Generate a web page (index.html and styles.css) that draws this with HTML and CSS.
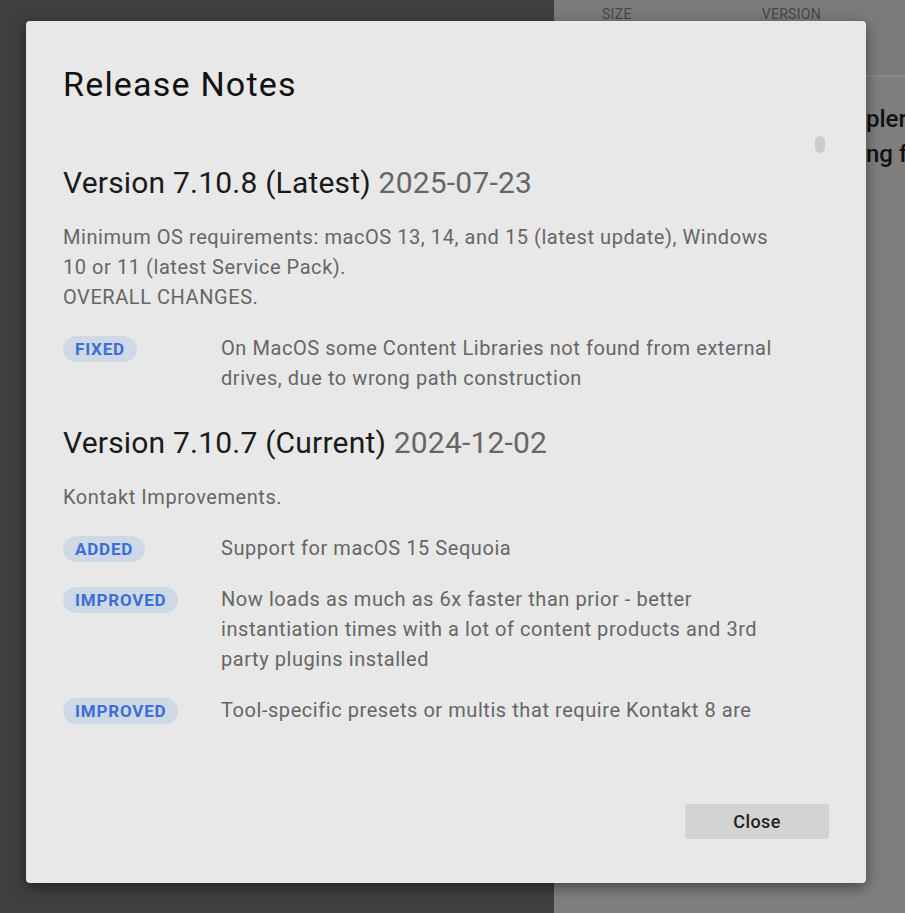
FILE: index.html
```html
<!DOCTYPE html>
<html lang="en">
<head>
    <meta charset="UTF-8">
    <meta name="viewport" content="width=device-width, initial-scale=1.0">
    <title>Release Notes</title>
    <link rel="stylesheet" href="styles.css">
</head>
<body>
    <div class="app">
        <div class="side-left"></div>
        <div class="side-right">
            <div class="table-head">
                <span class="col-size">Size</span>
                <span class="col-version">Version</span>
            </div>
            <div class="detail">
                <p>plers</p>
                <p>ng features</p>
            </div>
        </div>
    </div>

    <!-- Dialog -->
    <div class="modal">
        <h1 class="modal-title">Release Notes</h1>
        <div class="notes">
            <div class="notes-inner">
                <section class="release">
                    <h2>Version 7.10.8 (Latest) <span class="date">2025-07-23</span></h2>
                    <p class="intro">Minimum OS requirements: macOS 13, 14, and 15 (latest update), Windows 10 or 11 (latest Service Pack).<br>OVERALL CHANGES.</p>
                    <div class="change">
                        <div><span class="tag">Fixed</span></div>
                        <p>On MacOS some Content Libraries not found from external drives, due to wrong path construction</p>
                    </div>
                </section>
                <section class="release">
                    <h2>Version 7.10.7 (Current) <span class="date">2024-12-02</span></h2>
                    <p class="intro">Kontakt Improvements.</p>
                    <div class="change">
                        <div><span class="tag">Added</span></div>
                        <p>Support for macOS 15 Sequoia</p>
                    </div>
                    <div class="change">
                        <div><span class="tag">Improved</span></div>
                        <p>Now loads as much as 6x faster than prior - better instantiation times with a lot of content products and 3rd party plugins installed</p>
                    </div>
                    <div class="change">
                        <div><span class="tag">Improved</span></div>
                        <p>Tool-specific presets or multis that require Kontakt 8 are flagged in the browser and can no longer be loaded</p>
                    </div>
                </section>
            </div>
            <div class="scroll-thumb"></div>
        </div>
        <div class="modal-footer">
            <button class="btn-close">Close</button>
        </div>
    </div>
</body>
</html>
```

FILE: styles.css
```css
body {
    margin: 0;
    font-family: Roboto, "Noto Sans", sans-serif;
    overflow: hidden;
}
.app {
    display: flex;
    height: 100vh;
}
.side-left {
    flex: 0 0 554px;
    background-color: #3f3f3f;
}
.side-right {
    flex: 1;
    min-width: 0;
    background-color: #7e7e7e;
    display: flex;
    flex-direction: column;
}
.table-head {
    display: flex;
    height: 75px;
    border-bottom: 2px solid #878787;
    background-color: #7b7b7b;
    font-size: 14px;
    letter-spacing: 0.3px;
    text-transform: uppercase;
    color: #474747;
}
.col-size {
    margin-left: 48px;
    margin-top: 6px;
}
.col-version {
    margin-left: 130px;
    margin-top: 6px;
}
.detail {
    padding: 25px 0 0 312px;
    font-size: 24px;
    font-weight: 500;
    color: #111;
    white-space: nowrap;
    overflow: hidden;
}
.detail p {
    margin: 0;
    line-height: 35px;
}

.modal {
    position: absolute;
    top: 21px;
    left: 26px;
    width: 766px;
    padding: 43px 37px 44px;
    background-color: #e8e8e8;
    border-radius: 4px;
    box-shadow: 0 4px 14px rgba(0, 0, 0, 0.45);
}
.modal-title {
    margin: 0 0 26px;
    font-size: 34px;
    line-height: 40px;
    font-weight: 400;
    letter-spacing: 1.2px;
    color: #111;
}
.notes {
    position: relative;
    height: 597px;
    overflow: hidden;
}
.notes-inner {
    width: 726px;
    padding-top: 35px;
}
.release {
    margin-bottom: 32px;
}
.release h2 {
    margin: 0 0 21px;
    font-size: 30px;
    line-height: 36px;
    font-weight: 400;
    letter-spacing: 0.2px;
    color: #1a1a1a;
}
.release .date {
    color: #666;
}
.intro {
    margin: 0 0 21px;
    font-size: 20px;
    line-height: 30px;
    letter-spacing: 0.56px;
    color: #666;
}
.change {
    display: grid;
    grid-template-columns: 158px 1fr;
    margin-bottom: 21px;
}
.change:last-child {
    margin-bottom: 0;
}
.tag {
    display: inline-block;
    margin-top: 3px;
    padding: 0 12px;
    height: 26px;
    line-height: 26px;
    border-radius: 13px;
    background-color: #cfd8e6;
    color: #3c6fd6;
    font-size: 17px;
    font-weight: 700;
    letter-spacing: 0.8px;
    text-transform: uppercase;
}
.change p {
    margin: 0;
    font-size: 20px;
    line-height: 30px;
    letter-spacing: 0.56px;
    color: #666;
}
.scroll-thumb {
    position: absolute;
    top: 6px;
    left: 752px;
    width: 10px;
    height: 17px;
    border-radius: 5px;
    background-color: #cdcdcd;
}
.modal-footer {
    display: flex;
    justify-content: flex-end;
    margin-top: 77px;
}
.btn-close {
    width: 144px;
    height: 35px;
    border: none;
    border-radius: 3px;
    background-color: #d3d3d3;
    font-family: Roboto, "Noto Sans", sans-serif;
    font-size: 18px;
    font-weight: 500;
    letter-spacing: 0.4px;
    color: #222;
}
```
